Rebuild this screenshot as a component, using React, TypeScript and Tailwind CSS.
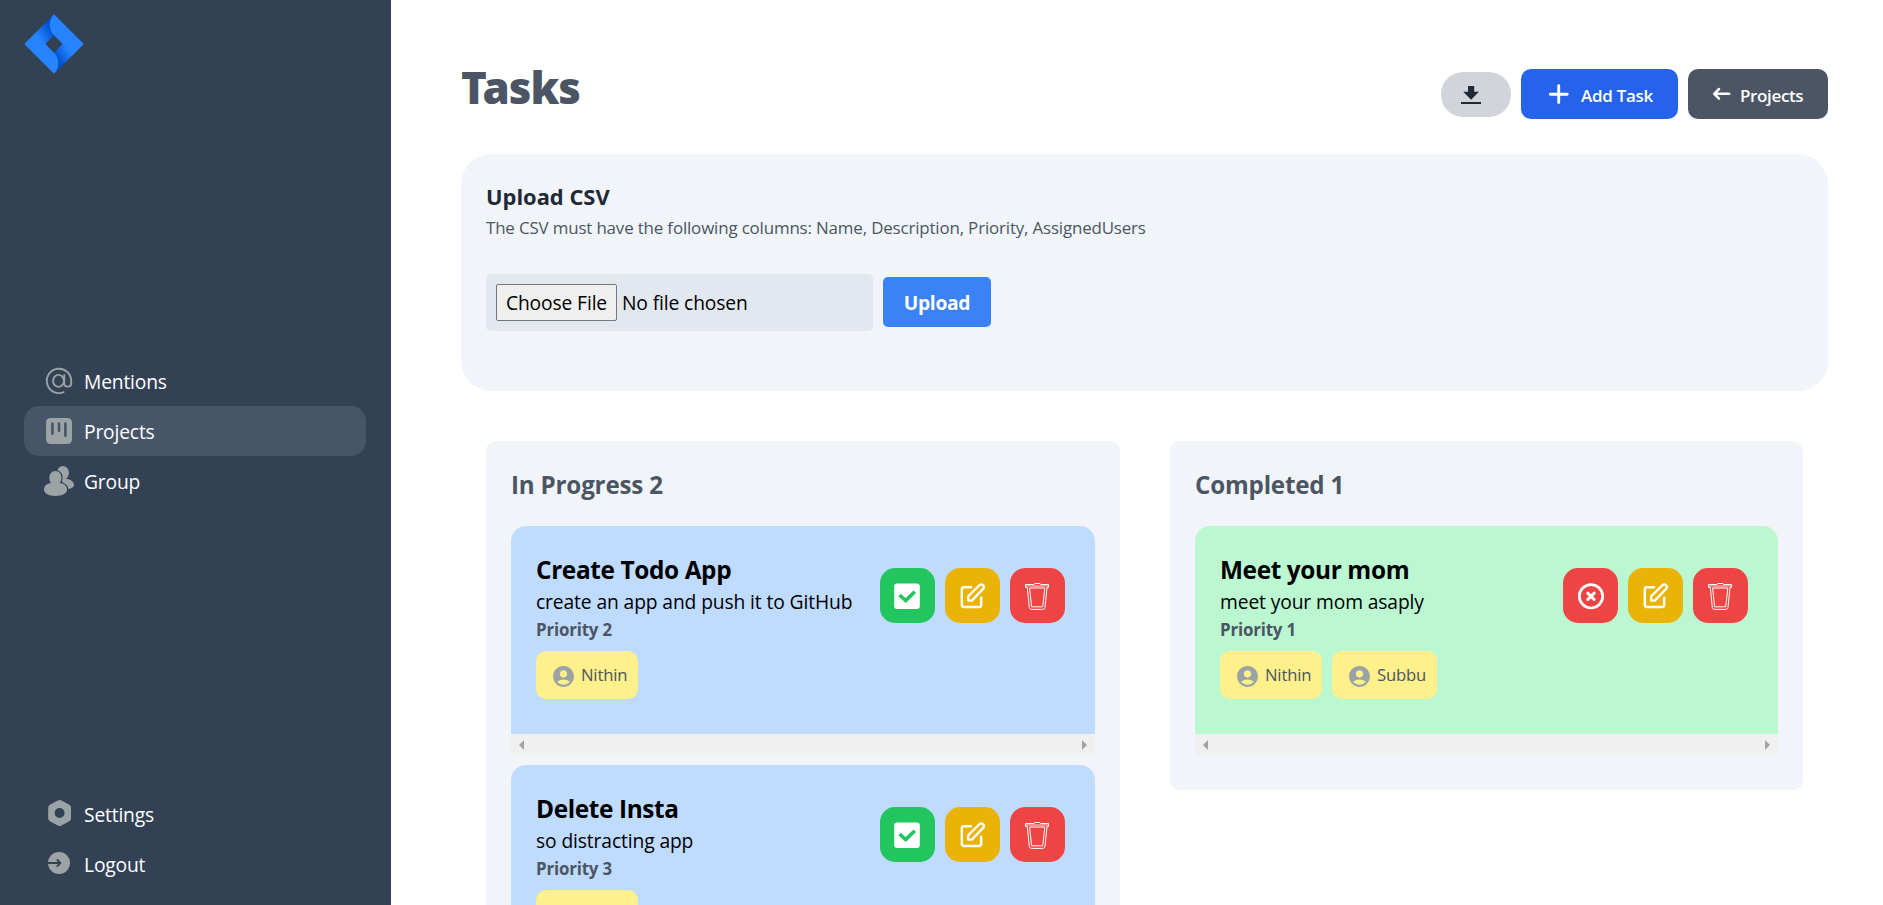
import type { ReactNode } from "react";
import { MdAccountCircle } from "react-icons/md";

const ICON = "#9ca3a5";

function Logo() {
  return (
    <svg width="90" height="90" viewBox="0 0 90 90" className="block">
      <defs>
        <linearGradient id="logo-a" gradientUnits="userSpaceOnUse" x1="53" y1="27" x2="38" y2="37">
          <stop offset="0.15" stopColor="#0052cc" />
          <stop offset="1" stopColor="#2684ff" />
        </linearGradient>
        <linearGradient id="logo-b" gradientUnits="userSpaceOnUse" x1="55" y1="61" x2="70" y2="51">
          <stop offset="0.15" stopColor="#0052cc" />
          <stop offset="1" stopColor="#2684ff" />
        </linearGradient>
      </defs>
      <path d="M54 14.2 25.5 42.7Q24.3 44 25.5 45.3L46 44.7 45.3 44 54 35.3Z" fill="url(#logo-a)" />
      <path d="M54 73.8 82.5 45.3Q83.7 44 82.5 42.7L62 43.3 62.7 44 54 52.7Z" fill="url(#logo-b)" />
      <path d="M54 14.2C48.3 20 48.3 29.5 54 35.3L62.9 44.2 82.4 45.4Q83.7 44 82.5 42.7Z" fill="#2684ff" />
      <path d="M54 73.8C59.7 68 59.7 58.5 54 52.7L45.1 43.8 25.6 42.6Q24.3 44 25.5 45.3Z" fill="#2684ff" />
    </svg>
  );
}

function NavItem({ label, active, children }: { label: string; active?: boolean; children: ReactNode }) {
  return (
    <li className={`flex h-[50px] items-center gap-[9px] rounded-[15px] pl-[19px] ${active ? "bg-[#475569]" : ""}`}>
      <svg width="32" height="32" viewBox="0 0 32 32" fill="none" className="shrink-0">
        {children}
      </svg>
      <span className="pt-[1px] text-[19.25px] leading-[28px] tracking-[-0.17px] text-white">{label}</span>
    </li>
  );
}

function Sidebar() {
  return (
    <aside className="flex w-[391px] shrink-0 flex-col bg-[#334155]">
      <Logo />
      <div className="flex flex-1 flex-col justify-between px-6 pt-[266px] pb-4">
        <ul className="mr-[1px]">
          <NavItem label="Mentions">
            <g stroke={ICON} strokeWidth="1.9" strokeLinecap="round">
              <ellipse cx="15.5" cy="15.9" rx="5.4" ry="6" />
              <path d="M20.6 27.2A12.2 12.2 0 1 1 28.2 16V18.2C28.2 22.8 21.2 22.8 21.2 18.2V10" />
            </g>
          </NavItem>
          <NavItem label="Projects" active>
            <rect x="3" y="3" width="26" height="26" rx="4.5" fill={ICON} />
            <path d="M9.4 8.5V18.8M16 8.5V15.8M22.4 8.5V20.8" stroke="#475569" strokeWidth="2.6" strokeLinecap="round" />
          </NavItem>
          <NavItem label="Group">
            <ellipse cx="19.9" cy="7.7" rx="6.1" ry="6.7" fill={ICON} />
            <path d="M18 14.5C24 12.5 31 15.5 31 20.2 31 22.5 27.5 24 23 24Z" fill={ICON} />
            <path
              d="M12.4 6C16.5 6 18.6 9.5 18.4 13.2 18.3 15.5 17.7 16.9 16.5 18.1 21 18.6 24 20.9 24 24.6 24 28.6 19 31 12.5 31 6 31 1 28.6 1 24.6 1 20.9 4 18.6 8.3 18.1 7.1 16.9 6.5 15.5 6.4 13.2 6.2 9.5 8.3 6 12.4 6Z"
              fill={ICON}
              stroke="#334155"
              strokeWidth="2.4"
              paintOrder="stroke"
            />
          </NavItem>
        </ul>
        <ul>
          <NavItem label="Settings">
            <path
              fillRule="evenodd"
              d="M14.8 2.6Q16.6 1.6 18.4 2.6L26.3 6.8Q28 7.8 28 9.8V20.2Q28 22.2 26.3 23.2L18.4 27.4Q16.6 28.4 14.8 27.4L6.9 23.2Q5.2 22.2 5.2 20.2V9.8Q5.2 7.8 6.9 6.8ZM16.6 10A5 5 0 1 0 16.6 20 5 5 0 1 0 16.6 10Z"
              fill={ICON}
            />
          </NavItem>
          <NavItem label="Logout">
            <circle cx="16" cy="15" r="11" fill={ICON} />
            <path d="M4.5 15H17M14.3 11.9L17.4 15 14.3 18.1" stroke="#334155" strokeWidth="1.9" strokeLinecap="round" strokeLinejoin="round" />
          </NavItem>
        </ul>
      </div>
    </aside>
  );
}

function ActionButton({ color, children }: { color: string; children: ReactNode }) {
  return (
    <button className={`h-[55px] w-[55px] rounded-[15px] ${color}`}>
      <svg width="55" height="55" viewBox="0 0 55 55" fill="none" stroke="white" className="block">
        {children}
      </svg>
    </button>
  );
}

function Actions({ done }: { done?: boolean }) {
  return (
    <div className="mt-[17px] mr-[5px] flex gap-[10px]">
      {done ? (
        <ActionButton color="bg-[#ef4444]">
          <circle cx="28" cy="28.3" r="11.7" strokeWidth="2.7" />
          <path d="M24.8 25.1L31.2 31.5M31.2 25.1L24.8 31.5" strokeWidth="3" strokeLinecap="round" />
        </ActionButton>
      ) : (
        <ActionButton color="bg-[#22c55e]">
          <rect x="14.2" y="15.4" width="25.6" height="25.6" rx="3" fill="white" stroke="none" />
          <path d="M19.6 27L25.7 32.6 34.8 23.8" stroke="#22c55e" strokeWidth="3.6" />
        </ActionButton>
      )}
      <ActionButton color="bg-[#eab308]">
        <path d="M27 19.3H19A2.2 2.2 0 0 0 16.8 21.5V36.8A2.2 2.2 0 0 0 19 39H34A2.2 2.2 0 0 0 36.2 36.8V28.8" strokeWidth="2.4" />
        <path d="M23.2 32.6V28.3L34.4 17.3A2.5 2.5 0 0 1 38.1 20.9L26.8 32.6Z" strokeWidth="2.3" strokeLinejoin="round" />
      </ActionButton>
      <ActionButton color="bg-[#ef4444]">
        <g strokeWidth="1" strokeLinejoin="round">
          <path d="M15.5 16.5H24L24.7 15.5H30L30.7 16.5H38.5V19.5H37L35 39.4Q34.7 41.4 32.6 41.4H21.7Q19.6 41.4 19.3 39.4L17.3 19.5H15.5Z" />
          <path d="M16 18H38" strokeWidth="0.8" />
          <path d="M19.6 20H34.8L32.7 38.8H21.6Z" />
        </g>
      </ActionButton>
    </div>
  );
}

function User({ name }: { name: string }) {
  return (
    <div className="flex h-12 items-center rounded-[10px] bg-[#fef08a] pr-[10.8px] pl-[15px]">
      <MdAccountCircle size={25} color={ICON} className="mt-[3px] mr-[5px]" />
      <span className="text-[16.7px] tracking-[-0.2px] text-[#4b5563]">{name}</span>
    </div>
  );
}

interface Task {
  title: string;
  description: string;
  priority: number;
  users: string[];
  done?: boolean;
}

function TaskCard({ task }: { task: Task }) {
  return (
    <article className="mb-[10px]">
      <div className={`flex h-[208px] justify-between rounded-t-[15px] p-[25px] ${task.done ? "bg-[#bbf7d0]" : "bg-[#bfdbfe]"}`}>
        <div>
          <h3 className="h-[35px] text-[24.4px] leading-[37px] font-bold tracking-[-0.38px] text-black">{task.title}</h3>
          <p className="h-[30px] text-[19.25px] leading-[31px] tracking-[-0.12px] text-black">{task.description}</p>
          <p className="h-[25px] text-[16.9px] leading-[27px] font-bold tracking-[-0.17px] text-[#4b5563]">
            Priority {task.priority}
          </p>
          <div className="mt-[10px] flex gap-[10px]">
            {task.users.map((u) => (
              <User key={u} name={u} />
            ))}
          </div>
        </div>
        <Actions done={task.done} />
      </div>
      <div className="flex h-[21px] items-center justify-between bg-[#f0f0f0] px-2">
        <svg width="5" height="10" viewBox="0 0 5 10">
          <path d="M5 0V10L0 5Z" fill="#a3a3a3" />
        </svg>
        <svg width="5" height="10" viewBox="0 0 5 10">
          <path d="M0 0V10L5 5Z" fill="#a3a3a3" />
        </svg>
      </div>
    </article>
  );
}

function Column({ title, tasks, className }: { title: string; tasks: Task[]; className: string }) {
  return (
    <section className={`rounded-[10px] bg-[#f1f5f9] p-[25px] ${className}`}>
      <h2 className="mb-[25px] h-[35px] text-[24.2px] leading-[37px] font-bold tracking-[-0.2px] text-[#4b5563]">
        {title}
      </h2>
      {tasks.map((t) => (
        <TaskCard key={t.title} task={t} />
      ))}
    </section>
  );
}

const inProgress: Task[] = [
  { title: "Create Todo App", description: "create an app and push it to GitHub", priority: 2, users: ["Nithin"] },
  { title: "Delete Insta", description: "so distracting app", priority: 3, users: ["Nithin"] },
];

const completed: Task[] = [
  { title: "Meet your mom", description: "meet your mom asaply", priority: 1, users: ["Nithin", "Subbu"], done: true },
];

export default function App() {
  return (
    <div className="flex h-screen overflow-hidden bg-white font-['Open_Sans',sans-serif]">
      <Sidebar />
      <main className="flex flex-1 flex-col pr-[55px] pl-[70px]">
        <header className="flex h-[154px] shrink-0 justify-between">
          <h1 className="pt-[56px] font-['Noto_Sans',sans-serif] text-[43.8px] leading-[62px] font-black tracking-[-0.95px] text-[#4b5563]">
            Tasks
          </h1>
          <div className="mt-[69px] flex h-[50px] items-center gap-[10px] self-start">
            <button className="h-[45px] w-[70px] rounded-[22px] bg-[#d1d5db]">
              <svg width="70" height="45" viewBox="0 0 70 45" fill="#1f2937" className="block">
                <path d="M27 14H33.2V19.8H38L30.1 27.8 22.2 19.8H27ZM20 30H40V32H20Z" />
              </svg>
            </button>
            <button className="flex h-[50px] w-[157px] items-center rounded-[10px] bg-[#2563eb] text-[17px] font-semibold tracking-[-0.28px] text-white">
              <svg width="60" height="50" viewBox="0 0 60 50" stroke="white" strokeWidth="2.9" strokeLinecap="round">
                <path d="M29.3 25.2H46.2M37.7 16.7V33.6" />
              </svg>
              <span className="pt-[3px]">Add Task</span>
            </button>
            <button className="flex h-[50px] w-[140px] items-center rounded-[10px] bg-[#4b5563] text-[17px] font-semibold tracking-[-0.36px] text-white">
              <svg width="52" height="50" viewBox="0 0 52 50" fill="none" stroke="white" strokeWidth="2.5" strokeLinecap="round" strokeLinejoin="round">
                <path d="M41.2 24.8H26.5M31 20L26.2 24.8 31 29.6" />
              </svg>
              <span className="pt-[3px]">Projects</span>
            </button>
          </div>
        </header>

        <section className="h-[237px] shrink-0 rounded-[30px] bg-[#f1f5f9] p-[25px]">
          <h2 className="h-[35px] text-[21.9px] leading-[36px] font-bold text-[#1f2937]">Upload CSV</h2>
          <p className="h-[25px] text-[16.9px] leading-[27px] tracking-[-0.15px] text-[#4b5563]">
            The CSV must have the following columns: Name, Description, Priority, AssignedUsers
          </p>
          <div className="mt-[35px] flex items-start gap-[10px]">
            <div className="flex h-[57px] w-[387px] items-center rounded-[5px] bg-[#e2e8f0] pl-[10px] text-[19.25px] tracking-[-0.13px] text-black">
              <button className="h-[37px] w-[121px] rounded-[2px] border border-[#767676] bg-[#efefef] leading-[35px] whitespace-nowrap">
                Choose File
              </button>
              <span className="ml-[5px] pt-[2px]">No file chosen</span>
            </div>
            <button className="mt-[3px] h-[50px] w-[108px] rounded-[5px] bg-[#3b82f6] text-[19.25px] leading-[51px] font-bold tracking-[-0.3px] text-white">
              Upload
            </button>
          </div>
        </section>

        <div className="flex shrink-0 items-start gap-[50px] px-[25px] pt-[50px]">
          <Column title="In Progress 2" tasks={inProgress} className="w-[634px]" />
          <Column title="Completed 1" tasks={completed} className="h-[349px] w-[633px]" />
        </div>
      </main>
    </div>
  );
}
